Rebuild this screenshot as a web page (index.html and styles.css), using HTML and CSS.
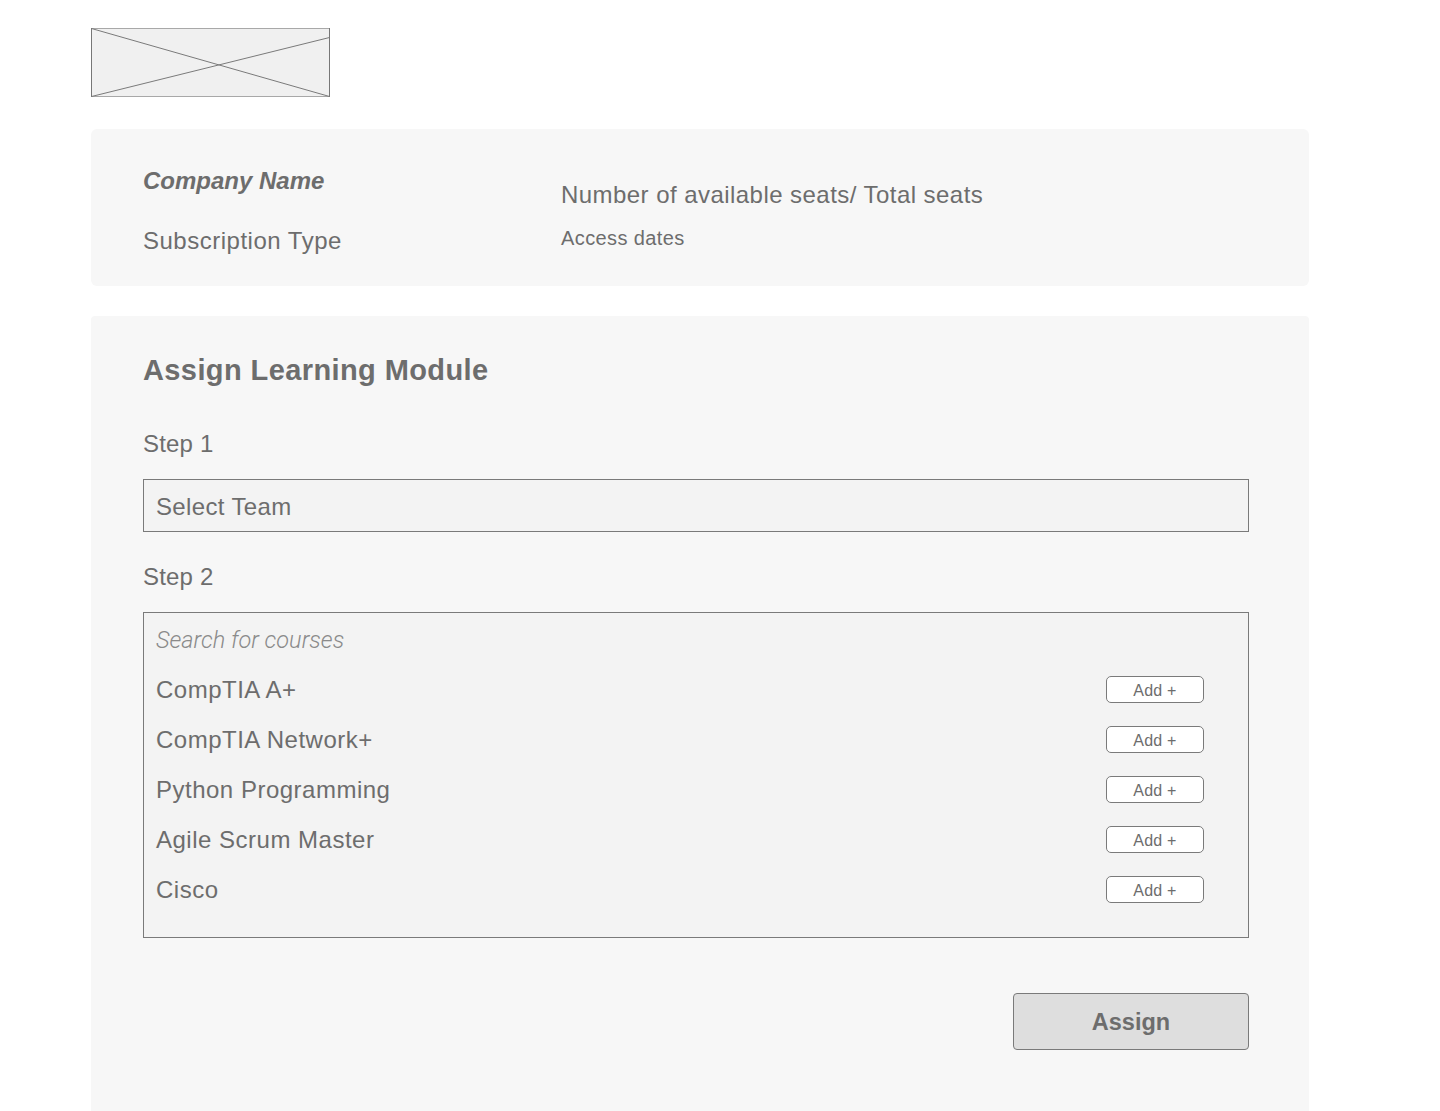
FILE: index.html
```html
<!DOCTYPE html>
<html>
<head>
<meta charset="utf-8">
<link rel="stylesheet" href="styles.css">
</head>
<body>
<div class="page">
  <div class="logo">
    <svg width="239" height="69" viewBox="0 0 239 69" preserveAspectRatio="none">
      <rect x="0" y="0" width="239" height="69" fill="#f0f0f0"/>
      <line x1="0" y1="0.5" x2="239" y2="0.5" stroke="#a8a8a8" stroke-width="1"/>
      <line x1="0" y1="68.5" x2="239" y2="68.5" stroke="#a8a8a8" stroke-width="1"/>
      <line x1="0.5" y1="0" x2="0.5" y2="69" stroke="#777777" stroke-width="1"/>
      <line x1="238.5" y1="0" x2="238.5" y2="69" stroke="#777777" stroke-width="1"/>
      <line x1="0.5" y1="0.5" x2="238.5" y2="68.5" stroke="#7a7a7a" stroke-width="1"/>
      <line x1="0.5" y1="68.5" x2="238.5" y2="9.5" stroke="#7a7a7a" stroke-width="1"/>
    </svg>
  </div>

  <section class="info-card">
    <div class="info-col info-left">
      <div class="company">Company Name</div>
      <div class="subscription">Subscription Type</div>
    </div>
    <div class="info-col info-right">
      <div class="seats">Number of available seats/ Total seats</div>
      <div class="dates">Access dates</div>
    </div>
  </section>

  <section class="main-card">
    <h1 class="title">Assign Learning Module</h1>
    <div class="step step-first">Step 1</div>
    <div class="select-box">Select Team</div>
    <div class="step">Step 2</div>
    <div class="search-box">
      <div class="search-placeholder">Search for courses</div>
      <div class="course"><span>CompTIA A+</span><button class="add-btn">Add +</button></div>
      <div class="course"><span>CompTIA Network+</span><button class="add-btn">Add +</button></div>
      <div class="course"><span>Python Programming</span><button class="add-btn">Add +</button></div>
      <div class="course"><span>Agile Scrum Master</span><button class="add-btn">Add +</button></div>
      <div class="course"><span>Cisco</span><button class="add-btn">Add +</button></div>
    </div>
    <div class="actions">
      <button class="assign-btn">Assign</button>
    </div>
  </section>
</div>
</body>
</html>
```

FILE: styles.css
```css
* { box-sizing: border-box; }
html, body {
  margin: 0;
  padding: 0;
  background: #ffffff;
}
body {
  font-family: "Liberation Sans", Arial, Helvetica, sans-serif;
  color: #6d6d6d;
  height: 1111px;
  overflow: hidden;
}
.page {
  width: 1218px;
  margin-left: 91px;
  padding-top: 28px;
}
.logo {
  width: 239px;
  height: 69px;
  display: block;
}
.logo svg { display: block; }

.info-card {
  margin-top: 32px;
  height: 157px;
  background: #f7f7f7;
  border-radius: 6px;
  padding: 39px 52px 0 52px;
  display: flex;
}
.info-col { display: flex; flex-direction: column; }
.info-left { width: 418px; }
.company {
  font-size: 24px;
  line-height: 26px;
  font-weight: bold;
  font-style: italic;
}
.subscription {
  margin-top: 34px;
  font-size: 24px;
  line-height: 26px;
  letter-spacing: 0.5px;
}
.info-right { padding-top: 14px; }
.seats {
  font-size: 24px;
  line-height: 26px;
  letter-spacing: 0.45px;
}
.dates {
  margin-top: 19px;
  font-size: 20px;
  line-height: 22px;
  letter-spacing: 0.4px;
}

.main-card {
  margin-top: 30px;
  height: 800px;
  background: #f7f7f7;
  border-radius: 4px 4px 0 0;
  padding: 37px 60px 0 52px;
}
.title {
  margin: 0;
  font-size: 29px;
  line-height: 34px;
  font-weight: bold;
  letter-spacing: 0.4px;
}
.step {
  margin-top: 32px;
  font-size: 24px;
  line-height: 26px;
  letter-spacing: 0.2px;
}
.step-first { margin-top: 44px; }
.select-box {
  margin-top: 22px;
  height: 53px;
  border: 1px solid #7a7a7a;
  background: #f3f3f3;
  padding: 2px 0 0 12px;
  display: flex;
  align-items: center;
  font-size: 24px;
  letter-spacing: 0.35px;
}
.search-box {
  margin-top: 22px;
  height: 326px;
  border: 1px solid #7a7a7a;
  background: #f3f3f3;
  padding: 14px 44px 0 12px;
}
.search-placeholder {
  font-family: Roboto, "Liberation Sans", sans-serif;
  font-style: italic;
  font-weight: 300;
  font-size: 23.5px;
  line-height: 26px;
  color: #8a8a8a;
  margin-bottom: 12px;
}
.course {
  height: 50px;
  display: flex;
  align-items: center;
  justify-content: space-between;
  font-size: 24px;
  letter-spacing: 0.5px;
}
.add-btn {
  width: 98px;
  height: 27px;
  margin-top: -1px;
  padding: 2px 0 0 0;
  border: 1px solid #7a7a7a;
  border-radius: 5px;
  background: #ffffff;
  color: #6d6d6d;
  font-family: "Liberation Sans", Arial, sans-serif;
  font-size: 16px;
  letter-spacing: 0.2px;
  cursor: pointer;
}
.actions {
  margin-top: 55px;
  display: flex;
  justify-content: flex-end;
}
.assign-btn {
  width: 236px;
  height: 57px;
  border: 1px solid #7a7a7a;
  border-radius: 4px;
  background: #dedede;
  color: #6d6d6d;
  font-family: "Liberation Sans", Arial, sans-serif;
  font-weight: bold;
  font-size: 23.5px;
  padding: 2px 0 0 0;
}
```
